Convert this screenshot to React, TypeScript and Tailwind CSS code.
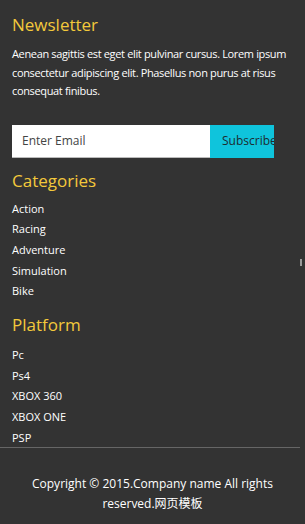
import React from 'react';

const categories = ['Action', 'Racing', 'Adventure', 'Simulation', 'Bike'];
const platforms = ['Pc', 'Ps4', 'XBOX 360', 'XBOX ONE', 'PSP'];

const LinkList: React.FC<{ items: string[] }> = ({ items }) => (
  <ul className="flex flex-col">
    {items.map((item) => (
      <li key={item} className="text-[11px] leading-[20.7px] text-white">
        <a href="#">{item}</a>
      </li>
    ))}
  </ul>
);

const App: React.FC = () => {
  return (
    <footer
      className="relative w-[305px] h-[524px] bg-[#333333] overflow-hidden"
      style={{ fontFamily: '"Open Sans", "Noto Sans CJK SC", sans-serif' }}
    >
      <div className="px-3 pt-[14px]">
        {/* Newsletter */}
        <h3 className="text-[17px] leading-[22px] text-[#f3c93b]">Newsletter</h3>
        <p className="mt-[9px] text-[11px] leading-[18.5px] tracking-[-0.35px] text-white">
          Aenean sagittis est eget elit pulvinar cursus. Lorem ipsum consectetur adipiscing elit. Phasellus non purus at risus consequat finibus.
        </p>
        <form className="mt-[24px] flex w-[262px] h-[33px]" onSubmit={(e) => e.preventDefault()}>
          <input
            type="text"
            placeholder="Enter Email"
            className="w-[198px] h-full bg-white px-[10px] text-[12px] text-[#444] placeholder:text-[#444] border-b border-[#bbbbbb] outline-none"
          />
          <button
            type="submit"
            className="w-[64px] h-full bg-[#0fc4dc] pl-[12px] text-left text-[12px] text-[#1d2b30] overflow-hidden whitespace-nowrap"
          >
            Subscribe
          </button>
        </form>

        {/* Categories */}
        <h3 className="mt-[12px] text-[17px] leading-[22px] text-[#f3c93b]">Categories</h3>
        <div className="mt-[7px]">
          <LinkList items={categories} />
        </div>

        {/* Platform */}
        <h3 className="mt-[12px] text-[17px] leading-[22px] text-[#f3c93b]">Platform</h3>
        <div className="mt-[9px]">
          <LinkList items={platforms} />
        </div>
      </div>

      <div className="mt-[-2px] w-[300px] h-px bg-[#666666]" />

      <p className="mt-[26px] px-6 text-center text-[12px] leading-[20px] text-white">
        Copyright © 2015.Company name All rights reserved.网页模板
      </p>

      <span className="absolute right-[3px] top-[259px] w-[2px] h-[7px] bg-[#9a9a9a]" />
    </footer>
  );
};

export default App;
